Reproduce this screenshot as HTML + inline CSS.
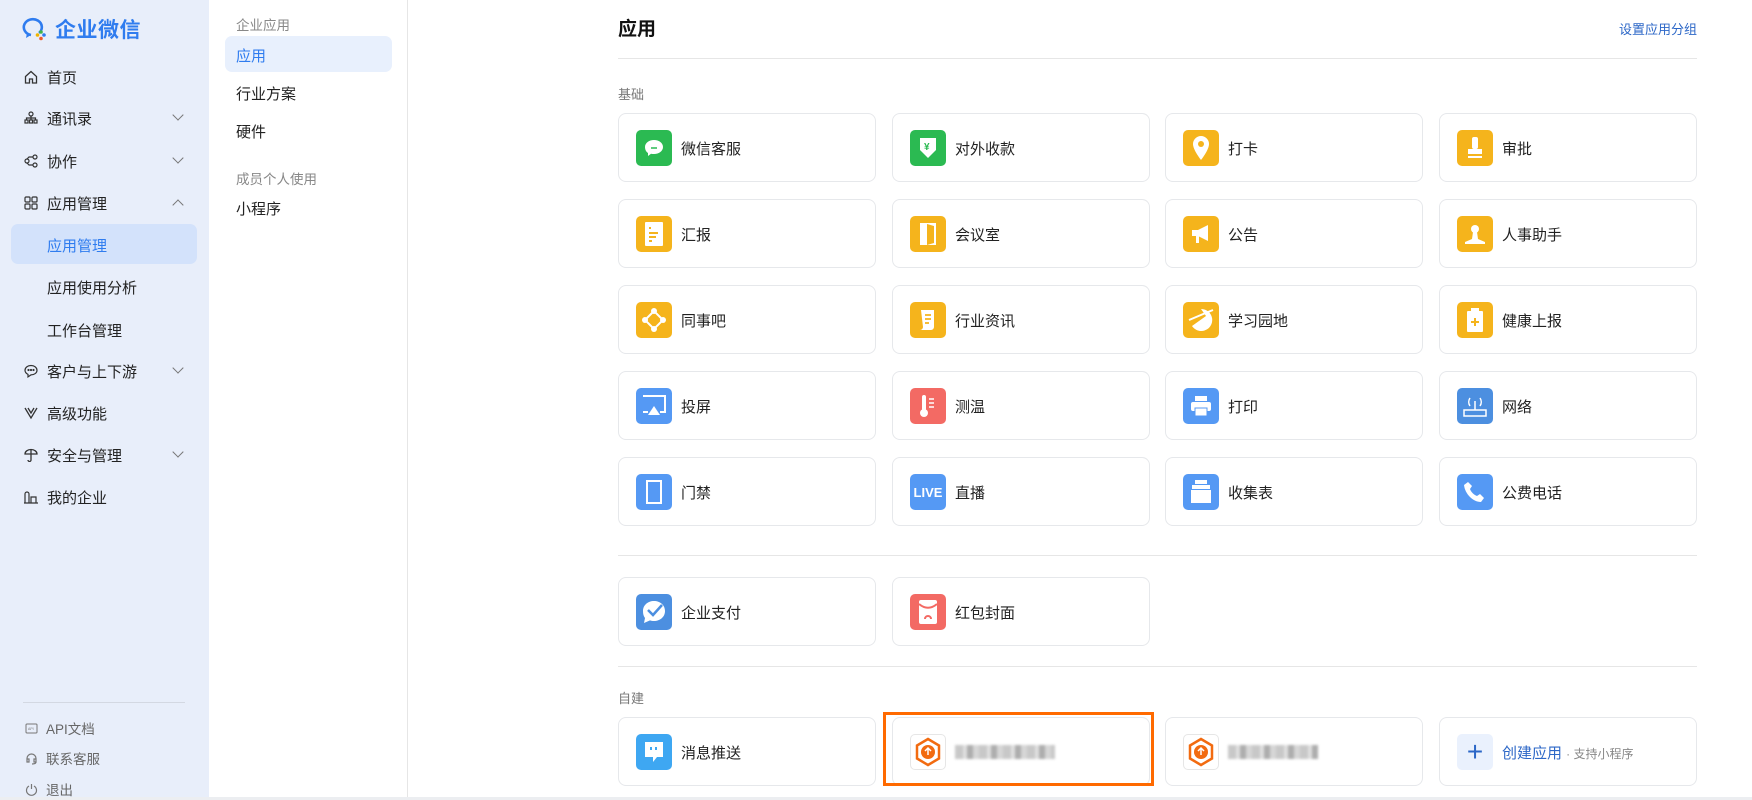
<!DOCTYPE html>
<html><head><meta charset="utf-8"><style>
*{box-sizing:border-box;margin:0;padding:0}
body{width:1752px;height:800px;overflow:hidden;font-family:"Liberation Sans","Noto Sans CJK SC",sans-serif;background:#fff;color:#222;position:relative}
.side{position:absolute;left:0;top:0;width:209px;height:800px;background:#e8eefa}
.logo{position:absolute;left:22px;top:14px;display:flex;align-items:center}
.logo span{font-size:21px;font-weight:bold;color:#2f7cef;margin-left:8px;letter-spacing:0.5px}
.mi{position:absolute;left:0;width:209px;height:40px;display:flex;align-items:center;font-size:15px;color:#222}
.mi svg{position:absolute;left:24px}
.mi .t{position:absolute;left:47px}
.mi .ch{position:absolute;left:174px;width:8px;height:8px;border-right:1.3px solid #777;border-bottom:1.3px solid #777;transform:rotate(45deg);top:13px}
.mi .up{transform:rotate(-135deg);top:18px}
.sel{position:absolute;left:11px;top:224px;width:186px;height:40px;background:#d3e2fb;border-radius:7px}
.bot{position:absolute;left:25px;font-size:13.5px;color:#666;display:flex;align-items:center}
.bot svg{margin-right:8px}
.col2{position:absolute;left:209px;top:0;width:199px;height:800px;background:#fff;border-right:1px solid #e6e6e6}
.c2{position:absolute;left:27px;font-size:15px;color:#222}
.c2g{position:absolute;left:27px;font-size:13.5px;color:#888}
.c2sel{position:absolute;left:16px;top:36px;width:167px;height:36px;background:#e8f0fd;border-radius:7px}
.main{position:absolute;left:618px;top:0;width:1079px}
.h1{position:absolute;left:0;top:14px;font-size:19px;font-weight:bold;color:#111}
.link{position:absolute;right:0;top:19px;font-size:13px;color:#2c67c7}
.hr{position:absolute;left:0;width:1079px;height:1px;background:#e6e6e6}
.lbl{position:absolute;left:0;font-size:13px;color:#777}
.card{position:absolute;width:258px;height:69px;border:1px solid #e6e8eb;border-radius:8px;background:#fff}
.ic{position:absolute;left:17px;top:16px;width:36px;height:36px;border-radius:5px;display:flex;align-items:center;justify-content:center;color:#fff;font-size:13px;font-weight:bold}
.nm{position:absolute;left:62px;top:24px;font-size:15px;color:#222}
.g{background:#2bba52}.y{background:#f5b41c}.b{background:#5599f4}.r{background:#f36a64}.bd{background:#4c8fe0}
.blur{position:absolute;left:62px;top:27px;height:14px;width:100px;background:repeating-linear-gradient(90deg,#bbb 0 8px,#d8d8d8 8px 12px,#999 12px 18px,#ccc 18px 24px);filter:blur(1.2px);opacity:.8}
</style></head><body>
<div class="side">
 <div class="logo"><svg width="25" height="25" viewBox="0 0 25 25"><path d="M17 16A9 8 0 1 0 9 18" fill="none" stroke="#2f7cef" stroke-width="2.6"/><path d="M5 16l-1 5 5-3z" fill="#2f7cef"/><circle cx="19" cy="15" r="1.8" fill="#3fb54a"/><circle cx="22" cy="18" r="1.8" fill="#2f7cef"/><circle cx="19" cy="21.5" r="1.8" fill="#f05a28"/><circle cx="15.5" cy="18" r="1.8" fill="#f0b400"/></svg><span>企业微信</span></div>
 <div class="sel"></div>
 <div class="mi" style="top:57px"><svg width="14" height="14" viewBox="0 0 14 14" fill="none" stroke="#333" stroke-width="1.3"><path d="M1.5 6.5L7 1.5l5.5 5V13h-4V9h-3v4h-4z"/></svg><span class="t">首页</span></div>
 <div class="mi" style="top:98px"><svg width="14" height="14" viewBox="0 0 14 14" fill="none" stroke="#333" stroke-width="1.2"><circle cx="7" cy="3" r="2"/><rect x="1" y="9" width="3" height="3"/><rect x="5.5" y="9" width="3" height="3"/><rect x="10" y="9" width="3" height="3"/><path d="M7 5v4M2.5 9V7h9v2"/></svg><span class="t">通讯录</span><i class="ch"></i></div>
 <div class="mi" style="top:141px"><svg width="14" height="14" viewBox="0 0 14 14" fill="none" stroke="#333" stroke-width="1.2"><circle cx="11" cy="3" r="2"/><circle cx="11" cy="11" r="2"/><circle cx="3" cy="7" r="2"/><path d="M9 3H5L3 5M9 11H5L3 9"/></svg><span class="t">协作</span><i class="ch"></i></div>
 <div class="mi" style="top:183px"><svg width="14" height="14" viewBox="0 0 14 14" fill="none" stroke="#333" stroke-width="1.2"><rect x="1" y="1" width="5" height="5" rx="1"/><rect x="8" y="1" width="5" height="5" rx="1"/><rect x="1" y="8" width="5" height="5" rx="1"/><rect x="8" y="8" width="5" height="5" rx="1"/></svg><span class="t">应用管理</span><i class="ch up"></i></div>
 <div class="mi" style="top:225px;color:#2f7cef"><span class="t">应用管理</span></div>
 <div class="mi" style="top:267px"><span class="t">应用使用分析</span></div>
 <div class="mi" style="top:310px"><span class="t">工作台管理</span></div>
 <div class="mi" style="top:351px"><svg width="14" height="14" viewBox="0 0 14 14" fill="none" stroke="#333" stroke-width="1.2"><path d="M7 1.5c3.3 0 6 2 6 4.7s-2.7 4.7-6 4.7l-3 2v-2.5C2.3 9.5 1 8 1 6.2 1 3.5 3.7 1.5 7 1.5z"/><circle cx="4.5" cy="6" r=".5"/><circle cx="7" cy="6" r=".5"/><circle cx="9.5" cy="6" r=".5"/></svg><span class="t">客户与上下游</span><i class="ch"></i></div>
 <div class="mi" style="top:393px"><svg width="14" height="14" viewBox="0 0 14 14" fill="none" stroke="#333" stroke-width="1.3"><path d="M1 2l6 10 6-10M4 2l3 5 3-5"/></svg><span class="t">高级功能</span></div>
 <div class="mi" style="top:435px"><svg width="14" height="14" viewBox="0 0 14 14" fill="none" stroke="#333" stroke-width="1.3"><path d="M1 6a6 4.5 0 0 1 12 0zM7 1v11a1.5 1.5 0 0 1-3 0"/></svg><span class="t">安全与管理</span><i class="ch"></i></div>
 <div class="mi" style="top:477px"><svg width="14" height="14" viewBox="0 0 14 14" fill="none" stroke="#333" stroke-width="1.2"><path d="M1 13V4a2 2 0 0 1 4 0v9zM7 13V7h5v6zM0 13h14"/></svg><span class="t">我的企业</span></div>
 <div style="position:absolute;left:23px;top:702px;width:162px;height:1px;background:#d3d8e2"></div>
 <div class="bot" style="top:718px"><svg width="13" height="13" viewBox="0 0 13 13" fill="none" stroke="#777"><rect x="1" y="2" width="11" height="9" rx="1"/><text x="3" y="8" font-size="3.5" fill="#777" stroke="none">API</text></svg>API文档</div>
 <div class="bot" style="top:748px"><svg width="13" height="13" viewBox="0 0 13 13" fill="none" stroke="#777" stroke-width="1.2"><path d="M2 8V6.5a4.5 4.5 0 0 1 9 0V8M2 7h2v3H2zM9 7h2v3H9zM11 10c0 1.5-2 2-4 2"/></svg>联系客服</div>
 <div class="bot" style="top:779px"><svg width="13" height="13" viewBox="0 0 13 13" fill="none" stroke="#777" stroke-width="1.2"><path d="M4 3a5 5 0 1 0 5 0M6.5 1v5"/></svg>退出</div>
</div>
<div class="col2">
 <div class="c2g" style="top:14px">企业应用</div>
 <div class="c2sel"></div>
 <div class="c2" style="top:45px;color:#2f7cef">应用</div>
 <div class="c2" style="top:83px">行业方案</div>
 <div class="c2" style="top:121px">硬件</div>
 <div class="c2g" style="top:168px">成员个人使用</div>
 <div class="c2" style="top:198px">小程序</div>
</div>
<div style="position:absolute;left:0;top:797px;width:1752px;height:3px;background:#eceef1"></div>
<div class="main">
 <div class="h1">应用</div><div class="link">设置应用分组</div>
 <div class="hr" style="top:58px"></div>
 <div class="lbl" style="top:84px">基础</div>

 <div class="card" style="left:0;top:113px"><div class="ic g"><svg width="22" height="20" viewBox="0 0 22 20"><path d="M11 2c5 0 9 3 9 7s-4 7-9 7c-1 0-2 0-3-.3L5 18v-3C3 13.7 2 11.5 2 9c0-4 4-7 9-7z" fill="#fff"/><path d="M8 10h6" stroke="#2bba52" stroke-width="1.5"/></svg></div><div class="nm">微信客服</div></div>
 <div class="card" style="left:274px;top:113px"><div class="ic g"><svg width="20" height="24" viewBox="0 0 20 24"><path d="M2 2h16v12l-8 8-8-8z" fill="#fff"/><text x="6" y="14" font-size="10" fill="#2bba52">¥</text></svg></div><div class="nm">对外收款</div></div>
 <div class="card" style="left:547px;top:113px"><div class="ic y"><svg width="18" height="26" viewBox="0 0 18 26"><path d="M9 1a8 8 0 0 1 8 8c0 6-8 16-8 16S1 15 1 9a8 8 0 0 1 8-8z" fill="#fff"/><circle cx="9" cy="9" r="3" fill="#f5b41c"/></svg></div><div class="nm">打卡</div></div>
 <div class="card" style="left:821px;top:113px"><div class="ic y"><svg width="20" height="24" viewBox="0 0 20 24" fill="#fff"><rect x="7" y="1" width="6" height="12" rx="2"/><rect x="3" y="13" width="14" height="5"/><rect x="3" y="20" width="14" height="2"/></svg></div><div class="nm">审批</div></div>

 <div class="card" style="left:0;top:199px"><div class="ic y"><svg width="20" height="26" viewBox="0 0 20 26"><rect x="1" y="1" width="18" height="24" rx="1" fill="#fff"/><path d="M5 7h2M5 12h9M5 16h7M5 20h3" stroke="#f5b41c" stroke-width="2"/></svg></div><div class="nm">汇报</div></div>
 <div class="card" style="left:274px;top:199px"><div class="ic y"><svg width="20" height="26" viewBox="0 0 20 26" fill="#fff"><path d="M2 2h16v22H2z"/><path d="M9 3l7 2v17l-7 2z" fill="#f5b41c"/></svg></div><div class="nm">会议室</div></div>
 <div class="card" style="left:547px;top:199px"><div class="ic y"><svg width="24" height="24" viewBox="0 0 24 24" fill="#fff"><path d="M3 8h6l10-5v16L9 14H3z"/><path d="M7 14h3v7H7z"/></svg></div><div class="nm">公告</div></div>
 <div class="card" style="left:821px;top:199px"><div class="ic y"><svg width="24" height="24" viewBox="0 0 24 24" fill="#fff"><circle cx="12" cy="7" r="4"/><path d="M10 10h4l1 7 7 3v2H2v-2l7-3z"/></svg></div><div class="nm">人事助手</div></div>

 <div class="card" style="left:0;top:285px"><div class="ic y"><svg width="26" height="26" viewBox="0 0 26 26" fill="#fff"><circle cx="13" cy="4" r="3"/><circle cx="13" cy="22" r="3"/><circle cx="4" cy="13" r="3"/><circle cx="22" cy="13" r="3"/><path d="M13 4L4 13l9 9 9-9z" fill="none" stroke="#fff" stroke-width="2"/></svg></div><div class="nm">同事吧</div></div>
 <div class="card" style="left:274px;top:285px"><div class="ic y"><svg width="22" height="24" viewBox="0 0 22 24"><path d="M4 2h13v17a3 3 0 0 1-3 3H3a3 3 0 0 0 3-3z" fill="#fff"/><path d="M8 7h6M8 11h6M8 15h4" stroke="#f5b41c" stroke-width="1.8"/></svg></div><div class="nm">行业资讯</div></div>
 <div class="card" style="left:547px;top:285px"><div class="ic y"><svg width="28" height="28" viewBox="0 0 28 28" fill="#fff"><path d="M14 3a11 11 0 1 1-9 17l14-10z"/><path d="M2 14c5-2 14-6 24-10" stroke="#fff" stroke-width="2"/></svg></div><div class="nm">学习园地</div></div>
 <div class="card" style="left:821px;top:285px"><div class="ic y"><svg width="20" height="26" viewBox="0 0 20 26"><rect x="2" y="4" width="16" height="21" rx="1" fill="#fff"/><rect x="6" y="1" width="8" height="4" fill="#fff"/><path d="M10 11v8M6 15h8" stroke="#f5b41c" stroke-width="2"/></svg></div><div class="nm">健康上报</div></div>

 <div class="card" style="left:0;top:371px"><div class="ic b"><svg width="26" height="24" viewBox="0 0 26 24"><path d="M2 2h22v16h-5M7 18H2z" fill="none" stroke="#fff" stroke-width="2"/><path d="M13 12l6 9H7z" fill="#fff"/></svg></div><div class="nm">投屏</div></div>
 <div class="card" style="left:274px;top:371px"><div class="ic r"><svg width="22" height="26" viewBox="0 0 22 26" fill="#fff"><rect x="5" y="2" width="4" height="16" rx="2"/><circle cx="7" cy="20" r="4"/><path d="M12 6h5M12 10h5M12 14h5" stroke="#fff" stroke-width="1.5"/></svg></div><div class="nm">测温</div></div>
 <div class="card" style="left:547px;top:371px"><div class="ic b"><svg width="24" height="24" viewBox="0 0 24 24" fill="#fff"><rect x="6" y="2" width="12" height="5"/><rect x="2" y="8" width="20" height="9" rx="2"/><rect x="6" y="14" width="12" height="8" stroke="#5599f4"/></svg></div><div class="nm">打印</div></div>
 <div class="card" style="left:821px;top:371px"><div class="ic bd"><svg width="26" height="26" viewBox="0 0 26 26" fill="none" stroke="#fff" stroke-width="1.5"><rect x="2" y="17" width="22" height="6"/><path d="M13 8v9M8 5a7 7 0 0 0 0 8M18 5a7 7 0 0 1 0 8"/></svg></div><div class="nm">网络</div></div>

 <div class="card" style="left:0;top:457px"><div class="ic b"><svg width="18" height="26" viewBox="0 0 18 26" fill="none" stroke="#fff" stroke-width="2"><rect x="2" y="2" width="14" height="22"/></svg></div><div class="nm">门禁</div></div>
 <div class="card" style="left:274px;top:457px"><div class="ic b" style="font-size:13px;letter-spacing:0">LIVE</div><div class="nm">直播</div></div>
 <div class="card" style="left:547px;top:457px"><div class="ic b"><svg width="24" height="26" viewBox="0 0 24 26" fill="#fff"><rect x="6" y="1" width="12" height="4"/><rect x="3" y="6" width="18" height="4"/><rect x="2" y="11" width="20" height="13"/></svg></div><div class="nm">收集表</div></div>
 <div class="card" style="left:821px;top:457px"><div class="ic b"><svg width="24" height="24" viewBox="0 0 24 24" fill="#fff"><path d="M5 2l4 4-2 3c1 3 4 6 7 7l3-2 4 4-3 4C10 22 2 14 1 5z"/></svg></div><div class="nm">公费电话</div></div>

 <div class="hr" style="top:555px"></div>
 <div class="card" style="left:0;top:577px"><div class="ic bd"><svg width="26" height="26" viewBox="0 0 26 26"><path d="M13 2c6 0 11 4 11 10s-5 10-11 10c-1.5 0-3-.2-4-.6L3 24l1-5C2.5 17 2 15 2 12 2 6 7 2 13 2z" fill="#fff"/><path d="M7 11l5 5 9-10" stroke="#4c8fe0" stroke-width="2.5" fill="none"/></svg></div><div class="nm">企业支付</div></div>
 <div class="card" style="left:274px;top:577px"><div class="ic r"><svg width="22" height="28" viewBox="0 0 22 28"><rect x="2" y="2" width="18" height="24" rx="2" fill="#fff"/><path d="M2 6c6 5 12 5 18 0" stroke="#f36a64" stroke-width="2" fill="none"/><path d="M8 21c0-4 6-4 6 0" stroke="#f36a64" stroke-width="2" fill="none"/></svg></div><div class="nm">红包封面</div></div>
 <div class="hr" style="top:666px"></div>
 <div class="lbl" style="top:688px">自建</div>

 <div class="card" style="left:0;top:717px"><div class="ic" style="background:#3ea7f2"><svg width="22" height="26" viewBox="0 0 22 26"><path d="M2 3h18v15h-6l-4 5v-5H2z" fill="#fff"/><path d="M8 8v3M13 8v3" stroke="#3ea7f2" stroke-width="2"/></svg></div><div class="nm">消息推送</div></div>
 <div class="card" style="left:274px;top:717px"><div class="ic" style="background:#fff;border:1px solid #e6e6e6"><svg width="28" height="30" viewBox="0 0 28 30"><path d="M14 2l11 6.5v13L14 28 3 21.5v-13z" fill="none" stroke="#f26b10" stroke-width="2.5"/><circle cx="14" cy="15" r="7" fill="#f26b10"/><path d="M14 11v7M11 14l3-3 3 3" stroke="#fff" stroke-width="1.5" fill="none"/></svg></div><div class="blur"></div></div>
 <div class="card" style="left:547px;top:717px"><div class="ic" style="background:#fff;border:1px solid #e6e6e6"><svg width="28" height="30" viewBox="0 0 28 30"><path d="M14 2l11 6.5v13L14 28 3 21.5v-13z" fill="none" stroke="#f26b10" stroke-width="2.5"/><circle cx="14" cy="15" r="7" fill="#f26b10"/><path d="M14 11v7M11 14l3-3 3 3" stroke="#fff" stroke-width="1.5" fill="none"/></svg></div><div class="blur" style="width:90px"></div></div>
 <div class="card" style="left:821px;top:717px"><div class="ic" style="background:#eaf1fd;color:#2c67c7;font-size:28px;font-weight:normal">+</div><div class="nm" style="color:#2c67c7">创建应用 <span style="color:#888;font-size:12px">· 支持小程序</span></div></div>
</div>
<div style="position:absolute;left:883px;top:712px;width:271px;height:74px;border:3px solid #ff6a00"></div>
</body></html>
